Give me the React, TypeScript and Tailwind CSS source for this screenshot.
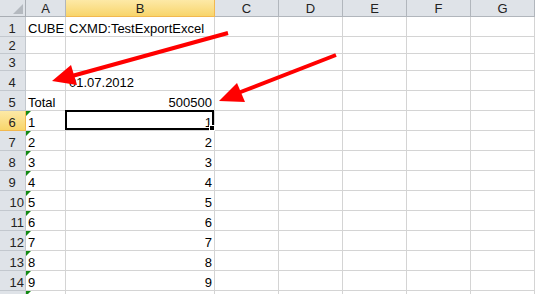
const cols = ["A", "B", "C", "D", "E", "F", "G"];

type Row = { n: number; h: string; a?: string; b?: string; bRight?: boolean; flag?: boolean };

const rows: Row[] = [
  { n: 1, h: "h-[20px]", a: "CUBE", b: "CXMD:TestExportExcel" },
  { n: 2, h: "h-[17px]" },
  { n: 3, h: "h-[17px]" },
  { n: 4, h: "h-[20px]", b: "01.07.2012" },
  { n: 5, h: "h-[20px]", a: "Total", b: "500500", bRight: true },
  ...Array.from({ length: 10 }, (_, i) => ({
    n: i + 6,
    h: "h-[20px]",
    a: i < 9 ? String(i + 1) : "",
    b: i < 9 ? String(i + 1) : "",
    bRight: true,
    flag: true,
  })),
];

const widths = ["w-[40px]", "w-[149px]", "w-[64px]", "w-[64px]", "w-[64px]", "w-[64px]", "w-[64px]"];

const Flag = () => (
  <svg className="absolute left-0 top-0" width="5" height="5" viewBox="0 0 5 5">
    <polygon points="0,0 5,0 0,5" fill="#138a13" />
  </svg>
);

const App = () => {
  return (
    <div
      className="relative w-[535px] h-[294px] overflow-hidden bg-white text-[13px] text-black"
      style={{ fontFamily: '"Liberation Sans", Arial, sans-serif' }}
    >
      {/* column headers */}
      <div className="flex h-[17px]">
        <div className="w-[26px] shrink-0 bg-[#dfe3e8] border-r border-b border-[#a9aeb4] flex items-end justify-end p-[2px]">
          <svg width="10" height="10" viewBox="0 0 10 10">
            <polygon points="10,0 10,10 0,10" fill="#b4b9bf" />
          </svg>
        </div>
        {cols.map((c, i) => (
          <div
            key={c}
            className={`${widths[i]} shrink-0 border-r border-b flex items-end justify-center leading-[14px] text-[#222] ${
              c === "B"
                ? "bg-gradient-to-b from-[#fde9a6] to-[#f8d56a] border-[#f2b84f]"
                : "bg-[#dfe3e8] border-[#b1b6bc]"
            }`}
          >
            {c}
          </div>
        ))}
      </div>

      {/* rows */}
      {rows.map((r) => (
        <div key={r.n} className={`flex ${r.h}`}>
          <div
            className={`w-[26px] shrink-0 border-r border-b flex items-end leading-[15px] text-[#222] ${
              r.n >= 10 ? "justify-end pr-[1px]" : "justify-center pr-[1px]"
            } ${
              r.n === 6
                ? "bg-gradient-to-b from-[#fde9a6] to-[#f8d56a] border-[#f2b84f]"
                : "bg-[#dfe3e8] border-[#c3c8ce]"
            }`}
          >
            {r.n < 15 ? r.n : ""}
          </div>
          <div className="relative w-[40px] shrink-0 border-r border-b border-[#d4d4d4] flex items-end leading-[15px] px-[2px] whitespace-nowrap">
            {r.flag && <Flag />}
            {r.a}
          </div>
          <div
            className={`relative w-[149px] shrink-0 border-r border-b border-[#d4d4d4] flex items-end leading-[15px] pl-[3px] pr-[2px] whitespace-nowrap ${
              r.bRight ? "justify-end" : ""
            }`}
          >
            {r.b}
            {r.n === 6 && (
              <div className="absolute -left-[1px] -top-[1px] right-0 bottom-0 border-2 border-black">
                <div className="absolute -right-[3px] -bottom-[3px] w-[6px] h-[6px] bg-black border border-white" />
              </div>
            )}
          </div>
          {[0, 1, 2, 3, 4].map((k) => (
            <div key={k} className="w-[64px] shrink-0 border-r border-b border-[#d4d4d4]" />
          ))}
        </div>
      ))}

      {/* annotation arrows */}
      <svg className="absolute left-0 top-0 pointer-events-none" width="535" height="294" viewBox="0 0 535 294">
        <line x1="228" y1="33" x2="72" y2="76" stroke="#ff0000" strokeWidth="4" />
        <polygon points="52,81 71,65 77,85" fill="#ff0000" />
        <line x1="336" y1="55" x2="238" y2="93" stroke="#ff0000" strokeWidth="4" />
        <polygon points="219,101 237,83 245,102" fill="#ff0000" />
      </svg>
    </div>
  );
};

export default App;
